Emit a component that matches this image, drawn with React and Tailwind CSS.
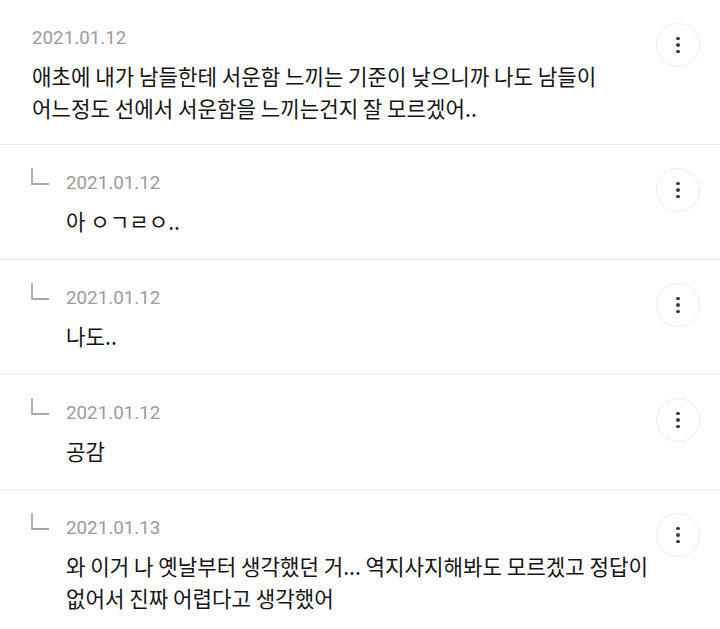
import React from "react";

const items = [
  {
    reply: false,
    date: "2021.01.12",
    lines: [
      "애초에 내가 남들한테 서운함 느끼는 기준이 낮으니까 나도 남들이",
      "어느정도 선에서 서운함을 느끼는건지 잘 모르겠어..",
    ],
  },
  { reply: true, date: "2021.01.12", lines: ["아 ㅇㄱㄹㅇ.."] },
  { reply: true, date: "2021.01.12", lines: ["나도.."] },
  { reply: true, date: "2021.01.12", lines: ["공감"] },
  {
    reply: true,
    date: "2021.01.13",
    lines: [
      "와 이거 나 옛날부터 생각했던 거... 역지사지해봐도 모르겠고 정답이",
      "없어서 진짜 어렵다고 생각했어",
    ],
  },
];

function MenuButton() {
  return (
    <button className="-mt-[3px] flex h-[44px] w-[44px] shrink-0 flex-col items-center justify-center gap-[3px] rounded-full border border-[#ececec] bg-white">
      <span className="block h-[3.5px] w-[3.5px] rounded-full bg-[#3a3a3a]" />
      <span className="block h-[3.5px] w-[3.5px] rounded-full bg-[#3a3a3a]" />
      <span className="block h-[3.5px] w-[3.5px] rounded-full bg-[#3a3a3a]" />
    </button>
  );
}

function Corner() {
  return (
    <div className="w-[35px] shrink-0">
      <svg width="20" height="19" viewBox="0 0 20 19" className="-mt-[4px] block">
        <path d="M1 1 V17 H18" fill="none" stroke="#a8a8a8" strokeWidth="1.8" />
      </svg>
    </div>
  );
}

function Item({ reply, date, lines }) {
  return (
    <div
      className={
        "flex items-start border-b border-[#ececec] pr-[20px] pt-[26px] " +
        (reply ? "pl-[31px] pb-[22px]" : "pl-[32px] pb-[20px]")
      }
    >
      {reply && <Corner />}
      <div className="min-w-0 flex-1">
        <div className="text-[18.8px] leading-[24px] text-[#9b9b9b] [font-family:Roboto,'Noto_Sans_CJK_KR',sans-serif]">
          {date}
        </div>
        <div className="mt-[10px] whitespace-nowrap text-[21.2px] leading-[32px] text-[#141414] [font-family:'Noto_Sans_CJK_KR','Noto_Sans',sans-serif]">
          {lines.map((l, i) => (
            <div key={i}>{l}</div>
          ))}
        </div>
      </div>
      <MenuButton />
    </div>
  );
}

export default function App() {
  return (
    <div className="h-[629px] w-[720px] overflow-hidden bg-white">
      {items.map((it, i) => (
        <Item key={i} {...it} />
      ))}
    </div>
  );
}
